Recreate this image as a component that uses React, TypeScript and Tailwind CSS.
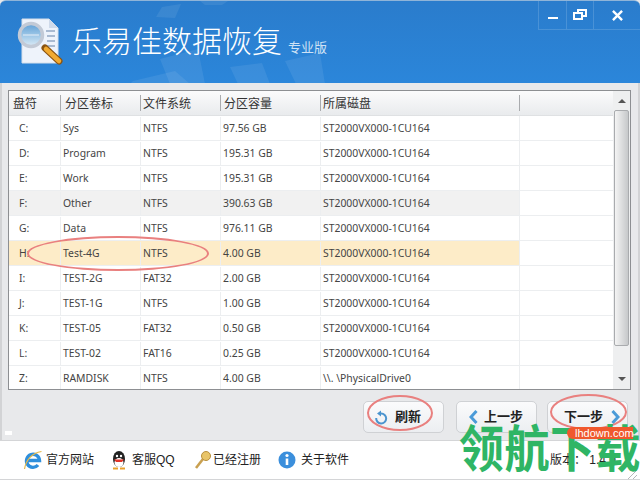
const rows = [
  ["C:", "Sys", "NTFS", "97.56 GB", "ST2000VX000-1CU164"],
  ["D:", "Program", "NTFS", "195.31 GB", "ST2000VX000-1CU164"],
  ["E:", "Work", "NTFS", "195.31 GB", "ST2000VX000-1CU164"],
  ["F:", "Other", "NTFS", "390.63 GB", "ST2000VX000-1CU164"],
  ["G:", "Data", "NTFS", "976.11 GB", "ST2000VX000-1CU164"],
  ["H:", "Test-4G", "NTFS", "4.00 GB", "ST2000VX000-1CU164"],
  ["I:", "TEST-2G", "FAT32", "2.00 GB", "ST2000VX000-1CU164"],
  ["J:", "TEST-1G", "NTFS", "1.00 GB", "ST2000VX000-1CU164"],
  ["K:", "TEST-05", "FAT32", "0.50 GB", "ST2000VX000-1CU164"],
  ["L:", "TEST-02", "FAT16", "0.25 GB", "ST2000VX000-1CU164"],
  ["Z:", "RAMDISK", "NTFS", "4.00 GB", "\\\\. \\PhysicalDrive0"],
];

const Ring = ({ className }: { className: string }) => (
  <div className={`absolute rounded-[50%] border-2 border-[#e9807f] ${className}`} />
);

const Logo = () => (
  <svg width="46" height="50" viewBox="0 0 46 50" className="shrink-0">
    <defs>
      <linearGradient id="lens" x1="0" y1="0" x2="0" y2="1">
        <stop offset="0" stopColor="#5f9fd6" />
        <stop offset="0.5" stopColor="#9cc6e6" />
        <stop offset="1" stopColor="#dcebf6" />
      </linearGradient>
    </defs>
    <path d="M5 2H32L41 11V46H5Z" fill="#eef3fb" stroke="#d5deea" />
    <path d="M32 2V11H41Z" fill="#cfdaea" />
    <path d="M29 14H38M30 19H38M30 24H38M30 29H38" stroke="#93a8c4" strokeWidth="1.5" />
    <path d="M28 31L42 44" stroke="#8a5412" strokeWidth="7" strokeLinecap="round" />
    <path d="M29 32L42 44" stroke="#f2aa30" strokeWidth="4.5" strokeLinecap="round" />
    <circle cx="14" cy="18" r="11.5" fill="url(#lens)" stroke="#c3cad6" strokeWidth="3.5" />
    <path d="M6 18H22" stroke="#e4eef7" strokeWidth="1.5" opacity="0.7" />
  </svg>
);

const FooterLink = ({ icon, label, className }: { icon: React.ReactNode; label: string; className: string }) => (
  <div className={`flex shrink-0 items-center ${className}`}>
    {icon}
    <span className="text-[12px] text-[#222]">{label}</span>
  </div>
);

const btn =
  "flex h-[32px] w-[81px] items-center rounded-[5px] border border-[#cfd1d4] bg-gradient-to-b from-[#fbfbfc] to-[#eceef1] text-[13px] font-bold text-[#222]";

export default function App() {
  return (
    <div className="relative flex h-[480px] w-[640px] flex-col overflow-hidden bg-[#e8e9eb] font-['Liberation_Sans','Noto_Sans_CJK_SC',sans-serif]">
      {/* title bar */}
      <div className="relative flex h-[83px] shrink-0 items-center overflow-hidden rounded-t-[6px] border-t border-[#8fb4d8] bg-gradient-to-b from-[#2a7ccc] to-[#2b86da] pl-[17px]">
        <svg width="640" height="83" viewBox="0 0 640 83" className="absolute left-0 top-0" fill="white" fillOpacity="0.08">
          <path d="M162 6L181 3L175 17L156 16Z" />
          <path d="M200 0L228 0L222 4L205 4Z" />
          <path d="M133 80L175 70L190 83H130Z" />
          <path d="M160 58L198 48L205 83H170Z" />
          <path d="M230 66L262 62L270 83H238Z" />
          <path d="M285 60L320 52L325 83H296Z" />
        </svg>
        <div className="relative">
          <Logo />
        </div>
        <span className="relative ml-[9px] whitespace-nowrap text-[30px] font-light leading-none text-white">乐易佳数据恢复</span>
        <span className="relative ml-[6px] mt-[12px] whitespace-nowrap text-[13px] text-[#cfe2f5]">专业版</span>
        <div className="absolute left-[538px] right-0 top-0 flex h-[29px] border-b border-white/15">
          <div className="flex w-[28px] items-center justify-center border-l border-white/15">
            <div className="mt-[6px] h-[2px] w-[10px] bg-white" />
          </div>
          <div className="flex w-[27px] items-center justify-center border-l border-white/15">
            <svg width="14" height="12" viewBox="0 0 14 12" fill="none" stroke="white" strokeWidth="2">
              <path d="M5 3V1H13V7H9" />
              <rect x="1" y="4" width="8" height="6" />
            </svg>
          </div>
          <div className="flex flex-1 items-center justify-center border-l border-white/15">
            <svg width="11" height="11" viewBox="0 0 12 12" stroke="white" strokeWidth="2.6">
              <path d="M1 1L11 11M11 1L1 11" />
            </svg>
          </div>
        </div>
      </div>

      <div className="flex h-[357px] shrink-0 flex-col border-x-2 border-[#d2d3d5]">
        {/* table */}
        <div className="ml-[6px] mr-[7px] mt-[7px] flex h-[300px] shrink-0 overflow-hidden border border-[#8d8f92] bg-white">
          <div className="min-w-0 flex-1">
            <div className="flex h-[25px] items-center border-b border-[#dfe1e3] bg-gradient-to-b from-[#fbfbfc] to-[#e9ebed] text-[12px] text-[#333]">
              <div className="h-[16px] w-[51px] pl-[4px] leading-[18px]">盘符</div>
              <div className="h-[16px] w-[80px] border-l border-[#a9abae] pl-[4px] leading-[18px]">分区卷标</div>
              <div className="h-[16px] w-[80px] border-l border-[#a9abae] pl-[2px] leading-[18px]">文件系统</div>
              <div className="h-[16px] w-[100px] border-l border-[#a9abae] pl-[3px] leading-[18px]">分区容量</div>
              <div className="h-[16px] w-[199px] border-l border-[#a9abae] pl-[2px] leading-[18px]">所属磁盘</div>
              <div className="h-[16px] flex-1 border-l border-[#a9abae]" />
            </div>
            {rows.map((r, i) => (
              <div key={r[0]} className="flex h-[25px] border-b border-[#eceef0] font-['Noto_Sans','Noto_Sans_CJK_SC',sans-serif] text-[10.4px] text-[#444]">
                <div className={`flex w-[510px] pt-[1px] ${i === 5 ? "bg-[#fdecc8]" : i === 3 ? "bg-[#f1f1f1]" : ""}`}>
                  <div className="flex w-[51px] items-center pl-[10px]">{r[0]}</div>
                  <div className="flex w-[80px] items-center border-l border-[#eceef0] pl-[2px]">{r[1]}</div>
                  <div className="flex w-[80px] items-center border-l border-[#eceef0] pl-[2px]">{r[2]}</div>
                  <div className="flex w-[100px] items-center border-l border-[#eceef0] pl-[2px]">{r[3]}</div>
                  <div className="flex w-[199px] items-center border-l border-[#eceef0] pl-[2px]">{r[4]}</div>
                </div>
                <div className="flex-1 border-l border-[#eceef0]" />
              </div>
            ))}
          </div>
          <div className="flex w-[17px] shrink-0 flex-col bg-[#eeeff0]">
            <div className="flex h-[19px] items-center justify-center">
              <div className="h-0 w-0 border-x-[4px] border-b-[4px] border-x-transparent border-b-[#555]" />
            </div>
            <div className="ml-[1px] h-[236px] w-[15px] rounded-[2px] border border-[#a9abae] bg-gradient-to-r from-[#f4f4f4] to-[#c6c8ca]" />
            <div className="flex flex-1 items-end justify-center pb-[8px]">
              <div className="h-0 w-0 border-x-[4px] border-t-[4px] border-x-transparent border-t-[#555]" />
            </div>
          </div>
        </div>

        {/* buttons */}
        <div className="flex shrink-0 items-start justify-end pr-[10px] pt-[11px]">
          <button className={`${btn} pl-[10px]`}>
            <svg width="15" height="15" viewBox="0 0 15 15" fill="none" stroke="#4b94cf" strokeWidth="2" className="mr-[6px]">
              <path d="M7 3.5A5 5 0 1 1 2.2 8" />
              <path d="M7 0.5V6.5L3 3.5Z" fill="#4b94cf" stroke="none" />
            </svg>
            刷新
          </button>
          <button className={`${btn} ml-[12px] pl-[12px]`}>
            <svg width="9" height="14" viewBox="0 0 9 14" fill="none" stroke="#4b9bd8" strokeWidth="3" className="mr-[6px]">
              <path d="M7.5 1L2 7L7.5 13" />
            </svg>
            上一步
          </button>
          <button className={`${btn} ml-[10px] pl-[16px]`}>
            下一步
            <svg width="9" height="14" viewBox="0 0 9 14" fill="none" stroke="#4b9bd8" strokeWidth="3" className="ml-[8px]">
              <path d="M1.5 1L7 7L1.5 13" />
            </svg>
          </button>
        </div>
      </div>

      {/* footer */}
      <div className="flex flex-1 items-center border-y border-[#d4d5d7] bg-white pl-[23px]">
        <FooterLink
          className="w-[86px] gap-[3px]"
          label="官方网站"
          icon={
            <svg width="20" height="20" viewBox="0 0 20 20" fill="none">
              <path d="M4 10.5H16.5A6.5 6.5 0 1 0 15 15" stroke="#2f8fdc" strokeWidth="3.4" />
              <path d="M1.5 19C3 10 9 3 18.5 1.5" stroke="#e5b94a" strokeWidth="1.2" />
            </svg>
          }
        />
        <FooterLink
          className="w-[85px] gap-[3px]"
          label="客服QQ"
          icon={
            <svg width="20" height="20" viewBox="0 0 20 20">
              <ellipse cx="10" cy="9" rx="6" ry="8" fill="#222" />
              <ellipse cx="10" cy="12.5" rx="4.5" ry="4.5" fill="white" />
              <path d="M5 9.5H15L13 12H7Z" fill="#e2352b" />
              <circle cx="8" cy="6" r="1.2" fill="white" />
              <circle cx="12" cy="6" r="1.2" fill="white" />
              <path d="M4 18.5H9M11 18.5H16" stroke="#e9a12c" strokeWidth="2" />
            </svg>
          }
        />
        <FooterLink
          className="w-[84px] gap-[1px]"
          label="已经注册"
          icon={
            <svg width="18" height="20" viewBox="0 0 18 20" fill="none">
              <path d="M9 9L2 18" stroke="#c9a050" strokeWidth="2.6" />
              <circle cx="12" cy="6" r="4.5" fill="#e8c468" stroke="#b98f3c" />
            </svg>
          }
        />
        <FooterLink
          className="w-[90px] gap-[5px]"
          label="关于软件"
          icon={
            <svg width="18" height="18" viewBox="0 0 18 18">
              <circle cx="9" cy="9" r="8.5" fill="#3b8fdc" />
              <circle cx="9" cy="4.5" r="1.6" fill="white" />
              <path d="M9 7.5V14" stroke="white" strokeWidth="2.6" />
            </svg>
          }
        />
        <span className="ml-auto mr-[24px] whitespace-nowrap text-[12px] text-[#222]">版本： 1.4.0</span>
      </div>

      {/* small white mark left of the footer */}
      <div className="absolute left-[5px] top-[431px] h-[4px] w-[7px] bg-white" />

      {/* resize grip */}
      <svg width="12" height="9" viewBox="0 0 12 9" className="absolute bottom-[1px] right-[2px]" stroke="#b5b7ba">
        <path d="M2 9L11 0M7 9L11 5" />
      </svg>

      {/* red marker rings */}
      <Ring className="left-[27px] top-[236px] h-[35px] w-[182px]" />
      <Ring className="left-[367px] top-[395px] h-[36px] w-[66px]" />
      <Ring className="left-[550px] top-[394px] h-[36px] w-[77px]" />

      {/* watermark */}
      <span className="absolute left-[459px] top-[425px] origin-top scale-y-[1.1] whitespace-nowrap text-[45px] font-bold leading-none tracking-[0.5px] text-[#2fb565]">
        领航下载
      </span>
      <div className="absolute left-[567px] top-[427px] h-[12px] w-[66px] rounded-l-[6px] bg-[#f0582d] pl-[8px] text-[11px] leading-[12px] text-white">
        lhdown.com
      </div>
    </div>
  );
}
